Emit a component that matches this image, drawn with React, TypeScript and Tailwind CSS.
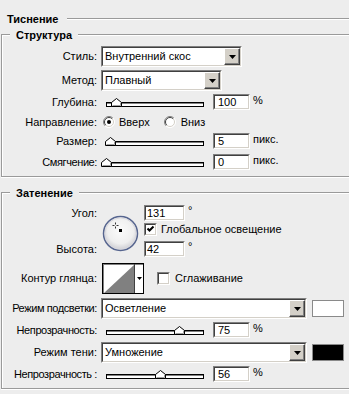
import React from 'react'

const sunkenOuter = 'border border-t-[#808080] border-l-[#808080] border-r-white border-b-white'
const sunkenInner = 'border border-t-[#404040] border-l-[#404040] border-r-[#d4d0c8] border-b-[#d4d0c8] bg-white'

function Etched({ className = '' }: { className?: string }) {
  return <div className={`h-[2px] border-y border-t-[#9a9a9a] border-b-white ${className}`} />
}

function Group({ title, className = '', children }: { title: string; className?: string; children: React.ReactNode }) {
  return (
    <div className={`ml-[1px] border-y border-l border-[#9a9a9a] shadow-[inset_1px_1px_0_#fff,0_1px_0_#fff] ${className}`}>
      <div className="-mt-[7px] ml-[8px] flex h-[14px] w-fit items-center bg-[#ededed] px-[6px] font-bold">{title}</div>
      {children}
    </div>
  )
}

function Label({ children, tight = false }: { children: React.ReactNode; tight?: boolean }) {
  return <div className={`w-[95px] shrink-0 text-right whitespace-nowrap ${tight ? 'tracking-[-0.4px]' : ''}`}>{children}</div>
}

function Arrow() {
  return (
    <svg width="7" height="4" viewBox="0 0 7 4">
      <polygon points="0,0 7,0 3.5,4" fill="#000" />
    </svg>
  )
}

function Dropdown({ value, w }: { value: string; w: string }) {
  return (
    <div className={`${w} h-[21px] ${sunkenOuter}`}>
      <div className={`flex h-full ${sunkenInner}`}>
        <div className="flex flex-1 items-center pl-[2px] whitespace-nowrap">{value}</div>
        <div className="flex h-full w-[16px] items-center justify-center border border-t-white border-l-white border-r-[#404040] border-b-[#404040] bg-[#d4d0c8] shadow-[inset_-1px_-1px_0_#808080]">
          <Arrow />
        </div>
      </div>
    </div>
  )
}

function Field({ value, w = 'w-[37px]', pad = 'pl-[3px]' }: { value: string; w?: string; pad?: string }) {
  return (
    <div className={`${w} h-[16px] ${sunkenOuter}`}>
      <div className={`flex h-full items-center ${pad} ${sunkenInner}`}>{value}</div>
    </div>
  )
}

function Slider({ pct }: { pct: number }) {
  return (
    <div className="relative h-[16px] w-[108px] shrink-0 pt-[8px] pl-[5px]">
      <div className="h-[5px] w-[98px] border border-black bg-white shadow-[inset_0_1px_0_#808080]" />
      <svg className="absolute top-[4px]" style={{ left: 5 + pct * 98 - 5.5 }} width="11" height="9" viewBox="0 0 11 9">
        <polygon points="0.5,8.5 0.5,4.5 5.5,0.5 10.5,4.5 10.5,8.5" fill="#fff" stroke="#000" />
        <polyline points="1.5,7.5 9.5,7.5 9.5,5" fill="none" stroke="#a0a0a0" />
      </svg>
    </div>
  )
}

function SliderRow({ label, pct, value, unit, className, tight = false }: { label: string; pct: number; value: string; unit: string; className: string; tight?: boolean }) {
  return (
    <div className={`flex h-[16px] items-center ${className}`}>
      <Label tight={tight}>{label}</Label>
      <div className="ml-[4px] flex items-center">
        <Slider pct={pct} />
        <div className="ml-[4px]">
          <Field value={value} />
        </div>
        <span className="ml-[3px] -mt-[4px]">{unit}</span>
      </div>
    </div>
  )
}

function Radio({ checked = false, className = '' }: { checked?: boolean; className?: string }) {
  return (
    <svg className={className} width="12" height="12" viewBox="0 0 12 12">
      <circle cx="6" cy="6" r="5.5" fill="#fff" />
      <path d="M2.1 9.9 A5.5 5.5 0 0 1 9.9 2.1" fill="none" stroke="#808080" />
      <path d="M9.9 2.1 A5.5 5.5 0 0 1 2.1 9.9" fill="none" stroke="#fff" />
      <path d="M2.8 9.2 A4.5 4.5 0 0 1 9.2 2.8" fill="none" stroke="#404040" />
      <path d="M9.2 2.8 A4.5 4.5 0 0 1 2.8 9.2" fill="none" stroke="#d4d0c8" />
      {checked && <circle cx="6" cy="6" r="2" fill="#000" />}
    </svg>
  )
}

function Check({ checked = false }: { checked?: boolean }) {
  return (
    <div className={`h-[13px] w-[13px] ${sunkenOuter}`}>
      <div className={`h-full w-full ${sunkenInner}`}>
        {checked && (
          <svg width="9" height="9" viewBox="0 0 9 9">
            <polyline points="1.5,3.5 3.5,5.5 7.5,1.5" fill="none" stroke="#000" strokeWidth="2" />
          </svg>
        )}
      </div>
    </div>
  )
}

function AngleDial() {
  return (
    <svg width="37" height="37" viewBox="0 0 37 37">
      <defs>
        <radialGradient id="dial" cx="50%" cy="42%" r="58%">
          <stop offset="0%" stopColor="#fbfbfb" />
          <stop offset="65%" stopColor="#efefef" />
          <stop offset="100%" stopColor="#c9c9cf" />
        </radialGradient>
      </defs>
      <circle cx="18.5" cy="18.5" r="17" fill="url(#dial)" stroke="#56658f" strokeWidth="1.5" />
      <circle cx="18.5" cy="18.5" r="15.6" fill="none" stroke="#d8d8de" strokeWidth="1" />
      <path d="M10.5 10.5 H12.5 M14.5 10.5 H16.5 M13.5 7.5 V9.5 M13.5 11.5 V13.5" stroke="#333" strokeWidth="1" />
      <rect x="17" y="14" width="3" height="3" fill="#000" />
    </svg>
  )
}

function Contour() {
  return (
    <div className="flex h-[31px] w-[42px] border border-black bg-white shadow-[inset_1px_1px_0_#808080]">
      <div className="pt-[1px] pl-[1px]">
        <svg width="30" height="28" viewBox="0 0 30 28">
          <polygon points="0,28 30,0 30,28" fill="#808080" />
        </svg>
      </div>
      <div className="w-[1px] bg-[#404040]" />
      <div className="flex flex-1 items-center justify-center">
        <svg width="5" height="3" viewBox="0 0 5 3">
          <polygon points="0,0 5,0 2.5,3" fill="#000" />
        </svg>
      </div>
    </div>
  )
}

export default function App() {
  return (
    <div className="h-[394px] w-[349px] overflow-hidden bg-[#ededed] pt-[12px] font-['Liberation_Sans',Arial,sans-serif] text-[11px] leading-none text-black">
      {/* Тиснение */}
      <div className="flex h-[14px] items-center pl-[7px]">
        <span className="font-bold">Тиснение</span>
        <Etched className="ml-[9px] flex-1" />
      </div>

      {/* Структура */}
      <Group title="Структура" className="mt-[8px] pb-[6px]">
        <div className="mt-[4px] flex h-[21px] items-center">
          <Label>Стиль:</Label>
          <div className="ml-[4px]">
            <Dropdown value="Внутренний скос" w="w-[141px]" />
          </div>
        </div>
        <div className="mt-[3px] flex h-[21px] items-center">
          <Label>Метод:</Label>
          <div className="ml-[4px]">
            <Dropdown value="Плавный" w="w-[121px]" />
          </div>
        </div>
        <SliderRow label="Глубина:" pct={0.11} value="100" unit="%" className="mt-[3px]" />
        <div className="mt-[4px] flex h-[16px] items-center">
          <Label>Направление:</Label>
          <Radio checked className="ml-[6px]" />
          <span className="ml-[4px]">Вверх</span>
          <Radio className="ml-[14px]" />
          <span className="ml-[5px]">Вниз</span>
        </div>
        <SliderRow label="Размер:" pct={0.05} value="5" unit="пикс." className="mt-[3px]" />
        <SliderRow label="Смягчение:" pct={0} value="0" unit="пикс." className="mt-[5px]" tight />
      </Group>

      {/* Затенение */}
      <Group title="Затенение" className="mt-[15px] pb-[6px]">
        <div className="mt-[5px] flex">
          <div className="flex w-[95px] flex-col">
            <div className="flex h-[16px] items-center justify-end">Угол:</div>
            <div className="mt-[20px] flex h-[16px] items-center justify-end">Высота:</div>
          </div>
          <div className="mt-[10px] ml-[5px]">
            <AngleDial />
          </div>
          <div className="ml-[5px] flex flex-col">
            <div className="flex h-[16px] items-center">
              <Field value="131" w="w-[41px]" pad="pl-[1px]" />
              <span className="ml-[3px] -mt-[6px]">°</span>
            </div>
            <div className="mt-[2px] flex h-[13px] items-center">
              <Check checked />
              <span className="ml-[4px] whitespace-nowrap">Глобальное освещение</span>
            </div>
            <div className="mt-[5px] flex h-[16px] items-center">
              <Field value="42" w="w-[41px]" pad="pl-[1px]" />
              <span className="ml-[3px] -mt-[6px]">°</span>
            </div>
          </div>
        </div>

        <div className="mt-[6px] flex h-[31px] items-center">
          <Label>Контур глянца:</Label>
          <div className="ml-[5px]">
            <Contour />
          </div>
          <div className="ml-[13px]">
            <Check />
          </div>
          <span className="ml-[5px]">Сглаживание</span>
        </div>

        <div className="mt-[4px] flex h-[21px] items-center">
          <Label tight>Режим подсветки:</Label>
          <div className="ml-[4px]">
            <Dropdown value="Осветление" w="w-[206px]" />
          </div>
          <div className="ml-[5px] h-[17px] w-[32px] border border-[#8a8a8a] bg-white" />
        </div>
        <SliderRow label="Непрозрачность:" pct={0.75} value="75" unit="%" className="mt-[3px]" tight />
        <div className="mt-[4px] flex h-[21px] items-center">
          <Label>Режим тени:</Label>
          <div className="ml-[4px]">
            <Dropdown value="Умножение" w="w-[206px]" />
          </div>
          <div className="ml-[5px] h-[17px] w-[32px] border border-[#8a8a8a] bg-black" />
        </div>
        <SliderRow label="Непрозрачность :" pct={0.56} value="56" unit="%" className="mt-[3px]" tight />
      </Group>
    </div>
  )
}
